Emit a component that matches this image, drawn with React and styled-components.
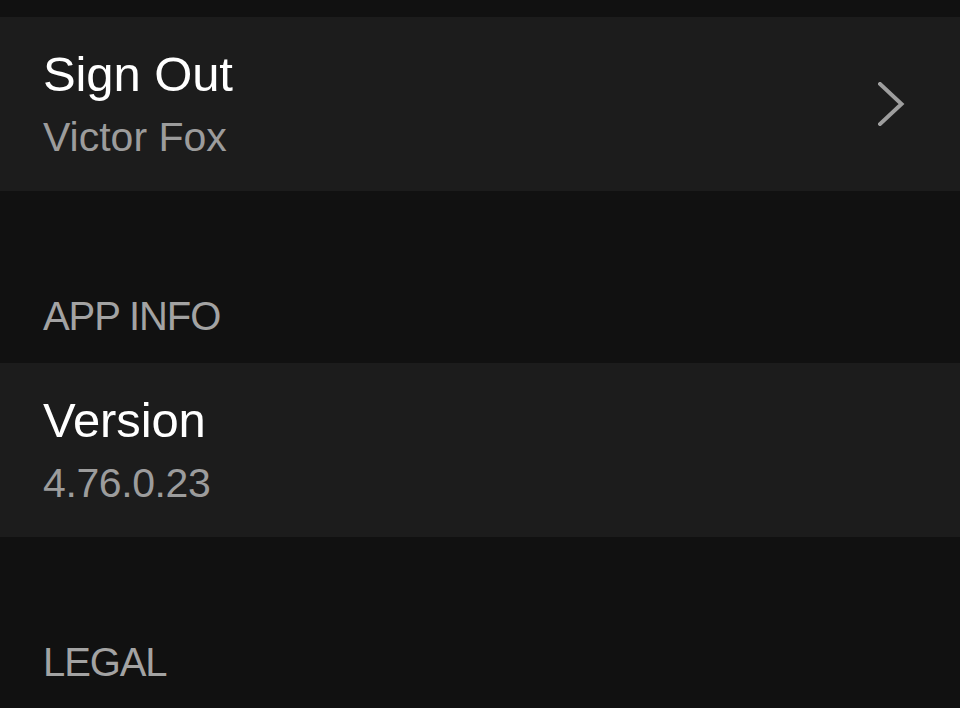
import React from "react";
import styled, { createGlobalStyle } from "styled-components";

export default function App() {
  return (
    <>
      <Global />
      <Page>
        <TopGap />
        <Row>
          <Texts>
            <Title>Sign Out</Title>
            <Subtitle>Victor Fox</Subtitle>
          </Texts>
          <Chevron viewBox="0 0 28 44" aria-hidden="true">
            <polyline points="2,2 23.5,22 2,42" />
          </Chevron>
        </Row>

        <SectionHeader>APP INFO</SectionHeader>
        <Row>
          <Texts>
            <Title>Version</Title>
            <Subtitle $digits>4.76.0.23</Subtitle>
          </Texts>
        </Row>

        <SectionHeader>LEGAL</SectionHeader>
      </Page>
    </>
  );
}

/* ───────── styles ───────── */
const Global = createGlobalStyle`
  html, body { margin:0; background:#111111; }
  body { font-family:"Liberation Sans", Arial, sans-serif; -webkit-font-smoothing:antialiased; }
`;

const Page = styled.div`
  width:960px; height:708px; overflow:hidden;
  display:flex; flex-direction:column; background:#111111;
`;

const TopGap = styled.div` height:17px; flex:none; `;

const Row = styled.div`
  flex:none; height:174px; box-sizing:border-box;
  display:flex; align-items:center; justify-content:space-between;
  padding:0 54px 0 43px; background:#1c1c1c;
`;

const Texts = styled.div`
  display:flex; flex-direction:column; gap:3px;
  align-self:flex-start; padding-top:27px;
`;

const Title = styled.div`
  font-size:49px; line-height:60px; color:#ffffff; letter-spacing:-0.1px;
`;

const Subtitle = styled.div`
  font-size:41px; line-height:60px; color:#9c9c9c;
  letter-spacing:${p => (p.$digits ? "-0.4px" : "0")};
`;

const Chevron = styled.svg`
  width:28px; height:44px; flex:none;
  fill:none; stroke:#9e9e9e; stroke-width:4; stroke-linecap:square;
`;

const SectionHeader = styled.div`
  flex:none; box-sizing:border-box; height:172px; padding:101px 43px 23px;
  font-size:40px; line-height:48px; color:#a3a3a3; letter-spacing:-1.1px;
`;
